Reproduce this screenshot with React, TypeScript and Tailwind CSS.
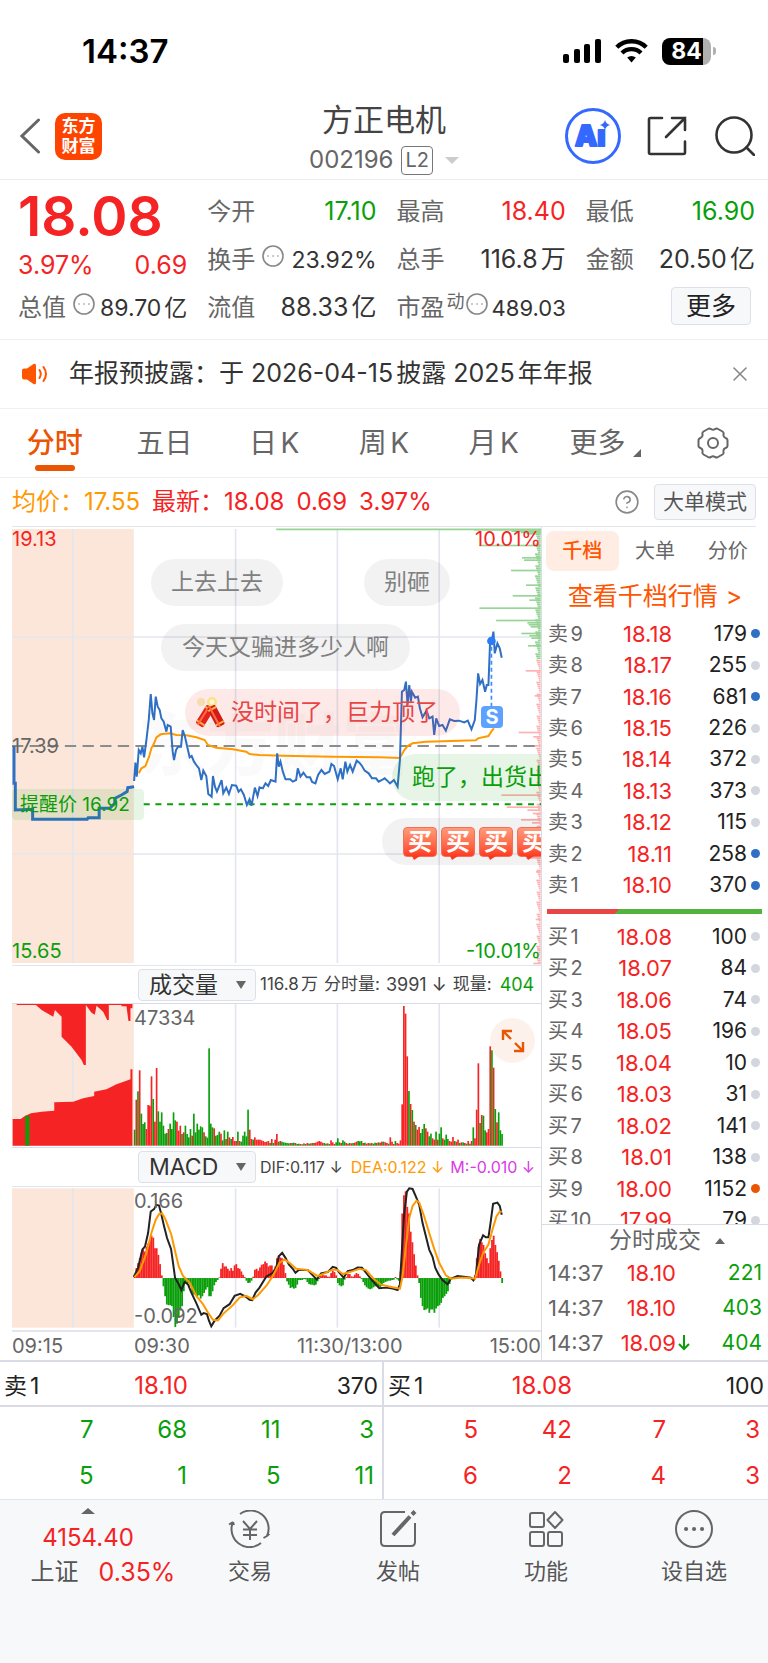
import type { ReactNode } from "react";
import { CircleEllipsis, CircleQuestionMark, X } from "lucide-react";

type Level = { label: string; price: string; qty: string; dot?: string };

const sells: Level[] = [
  { label: "卖9", price: "18.18", qty: "179", dot: "bg-[#2f6fc4]" },
  { label: "卖8", price: "18.17", qty: "255" },
  { label: "卖7", price: "18.16", qty: "681", dot: "bg-[#2f6fc4]" },
  { label: "卖6", price: "18.15", qty: "226" },
  { label: "卖5", price: "18.14", qty: "372" },
  { label: "卖4", price: "18.13", qty: "373" },
  { label: "卖3", price: "18.12", qty: "115" },
  { label: "卖2", price: "18.11", qty: "258", dot: "bg-[#2f6fc4]" },
  { label: "卖1", price: "18.10", qty: "370", dot: "bg-[#2f6fc4]" },
];

const buys: Level[] = [
  { label: "买1", price: "18.08", qty: "100" },
  { label: "买2", price: "18.07", qty: "84" },
  { label: "买3", price: "18.06", qty: "74" },
  { label: "买4", price: "18.05", qty: "196" },
  { label: "买5", price: "18.04", qty: "10" },
  { label: "买6", price: "18.03", qty: "31" },
  { label: "买7", price: "18.02", qty: "141" },
  { label: "买8", price: "18.01", qty: "138" },
  { label: "买9", price: "18.00", qty: "1152", dot: "bg-[#ea5504]" },
  { label: "买10", price: "17.99", qty: "79" },
];

const trades = [
  { time: "14:37", price: "18.10", qty: "221", down: false },
  { time: "14:37", price: "18.10", qty: "403", down: false },
  { time: "14:37", price: "18.09", qty: "404", down: true },
];

// One bar per minute. Above zero is red, below zero is green.
const volume = [
  -48, 138, -163, 226, -96, -65, -70, 50, 122, 120, 208, -140, 72, 233, -103, -72, -100, -60, -36, -38,
  50, -66, -50, -100, -76, 72, 45, 60, -35, 40, -60, -35, -25, -50, 30, -96, -40, -66, -48, -58,
  -55, 40, -28, -24, -292, -66, -55, 52, -30, -32, -42, 36, -16, -46, 20, -42, 25, -20, 26, 14,
  14, -42, 14, -12, -30, -42, -28, -108, 48, 20, -18, 25, 18, 18, 18, 16, 14, 11, 12, 14,
  -8, 20, -8, 18, 35, -12, 14, -12, -10, -9, -8, -7, 8, -8, -9, 8, -5, -6, 5, -4,
  7, -5, 8, -6, 7, -8, 8, 9, 12, 14, 12, 9, -8, -6, 7, -5, 16, 10, 5, -10,
  -22, -10, 8, -16, -12, 8, 6, -8, 7, -8, 9, 12, -14, -13, -14, 8, -9, 6, 8, -7,
  8, -6, -9, 8, -10, 9, 12, -12, 10, 8, -6, 25, 12, 5, -14, 8, 6, 16, 124, 419,
  396, 268, -164, 125, -107, 72, -62, 48, 56, -38, -50, -65, 52, 42, -28, -36, 22, 18, -42, 18,
  -36, -55, 22, -18, -33, -20, 14, 12, 26, -14, 12, 18, -8, 10, -10, 8, -6, 14, -6, 14,
  -55, 22, 108, 247, -68, 92, -90, -46, 40, 50, 298, -286, 234, -110, 70, -100, -46, -35,
];

const macd = [
  10, 30, 45, 60, 75, 85, 80, 95, 105, 115, 128, 122, 90, 90, 70, 42, 8, -25, -55, -80,
  -82, -82, -85, -118, -148, -138, -120, -98, -85, -40, -15, -15, -15, -25, -45, -50, -50, -55, -52, -62,
  -55, -45, -35, -28, -55, -55, -40, -22, -12, -6, 2, 28, 45, 35, 35, 28, 22, 30, 22, 38,
  42, 30, 28, 20, 10, 3, -8, -15, -14, -8, 4, 25, 28, 22, 32, 40, 42, 50, 45, 35,
  38, 38, 25, 35, 60, 68, 62, 60, 40, 15, -10, -20, -30, -28, -32, -30, -20, -6, -6, -6,
  -3, -4, -12, -18, -20, -20, -22, -20, -10, -3, 6, 10, 8, 8, 4, 4, 15, 22, 18, 8,
  -15, -22, -25, -22, -5, 3, 12, 12, 5, 4, 10, 15, 12, 5, -3, -12, -22, -28, -32, -34,
  -32, -28, -25, -22, -26, -28, -24, -15, -12, -10, -8, -8, -6, -5, 3, -4, -8, 20, 195, 250,
  262, 215, 195, 140, 108, 72, 38, 8, -15, -60, -85, -97, -95, -92, -105, -95, -95, -105, -92, -85,
  -82, -75, -60, -55, -48, -40, -18, -3, 0, 0, 0, 2, 2, 0, 0, 2, 0, 0, -3, -4,
  -4, 10, 60, 95, 118, 108, 100, 75, 60, 45, 90, 115, 128, 100, 78, 52, 20, -15,
];

// [y, length] of the long orders in the price distribution on the right edge
const askDepth = [
  [29, 200], [33, 88], [37, 60], [41, 42], [76, 184], [113, 56], [120, 50], [151, 89], [195, 44],
  [227, 84], [240, 34], [264, 184], [301, 134], [308, 40], [314, 36], [320, 30], [340, 58], [347, 34], [354, 28], [377, 38],
];
const bidDepth = [
  [452, 45], [527, 18], [637, 66], [650, 22], [677, 26], [825, 118], [861, 102], [870, 40], [880, 24],
  [899, 59], [908, 26], [1013, 44], [1055, 14], [1198, 15], [1290, 10], [1330, 22],
];

const pricePoints =
  "403,783 407,728 411,770 417,690 423,700 428,680 433,712 440,660 447,600 453,522 458,580 463,600 468,530 474,560 480,570 485,595 492,605 500,635 504,615 513,620 519,695 523,720 529,690 535,680 544,680 549,630 556,650 563,682 570,712 576,708 583,725 592,738 598,745 605,780 611,752 620,768 626,822 636,830 640,768 646,800 652,815 658,800 666,780 671,820 680,803 688,822 697,795 710,797 717,815 724,808 733,825 742,855 750,838 756,857 766,803 774,828 780,802 790,805 798,790 806,798 814,780 828,785 833,700 838,740 843,725 850,755 858,778 872,778 880,785 890,780 895,745 903,770 912,758 922,772 932,772 938,786 948,790 956,765 966,750 976,762 990,755 996,732 1004,738 1015,778 1024,745 1030,778 1038,725 1044,755 1052,735 1060,755 1072,722 1080,728 1088,738 1096,752 1108,760 1118,775 1130,775 1138,785 1148,780 1156,775 1164,782 1172,790 1184,780 1195,800 1202,720 1208,515 1215,510 1220,485 1225,555 1230,495 1235,545 1238,515 1248,533 1256,530 1262,565 1270,592 1282,572 1290,595 1300,590 1305,645 1311,595 1320,618 1330,615 1340,632 1352,598 1365,603 1380,602 1395,607 1406,602 1417,628 1427,600 1432,540 1437,460 1443,492 1450,480 1458,515 1463,495 1468,495 1473,365 1478,365 1483,335 1487,400 1495,370 1502,385 1508,413";
const averagePoints =
  "417,760 425,745 437,738 448,710 455,685 462,672 470,652 483,643 510,640 530,645 560,646 590,652 615,660 625,675 650,683 700,688 740,695 750,702 780,705 850,707 1000,710 1140,712 1202,714 1215,690 1225,678 1240,670 1280,665 1430,661 1437,655 1468,648 1480,630 1485,625";
const auctionPoints =
  "42,678 42,790 46,790 46,870 98,868 98,898 262,898 265,893 298,893 298,865 330,865 345,850 345,835 365,825 382,815 384,803 403,800";
const difPoints =
  "402,383 415,355 428,300 436,290 445,250 453,185 463,178 470,165 478,167 484,190 492,225 502,265 514,298 520,340 526,385 537,405 545,422 555,398 565,405 575,430 590,462 605,497 612,492 622,495 628,515 635,532 645,515 660,500 672,477 690,465 705,440 722,434 738,442 750,452 758,453 768,430 780,415 800,382 820,370 830,355 838,320 848,310 858,325 868,345 880,358 888,370 898,362 925,362 940,378 952,390 965,372 985,368 1000,352 1010,355 1020,370 1033,385 1045,365 1060,362 1075,354 1088,355 1100,370 1120,395 1140,417 1160,415 1180,418 1195,422 1202,405 1208,300 1215,190 1223,125 1230,115 1240,117 1250,140 1260,165 1270,220 1280,260 1290,300 1300,322 1308,355 1318,375 1330,392 1345,405 1355,388 1375,380 1400,383 1415,385 1423,393 1430,380 1440,285 1452,257 1460,263 1468,263 1475,215 1482,162 1495,158 1502,168 1508,195";
const deaPoints =
  "404,383 420,365 440,310 455,250 468,210 478,193 487,190 497,208 515,255 525,300 537,350 550,380 570,400 590,440 610,465 625,490 640,512 655,514 670,495 700,468 720,445 740,440 760,450 775,438 800,410 820,380 840,340 855,330 870,340 890,358 925,362 955,380 975,372 1000,360 1015,362 1030,374 1060,365 1080,358 1100,362 1120,385 1145,406 1180,414 1202,418 1210,380 1220,290 1230,205 1240,168 1252,152 1260,158 1275,200 1290,250 1305,298 1320,340 1340,378 1355,388 1380,385 1405,385 1428,388 1440,345 1452,310 1468,285 1480,240 1492,200 1502,185 1508,187";

function StatusBar() {
  return (
    <div className="flex h-24 items-center justify-between pl-[82px] pr-[52px] pt-1.5">
      <span className="text-[33px] font-semibold leading-10 text-black">14:37</span>
      <div className="flex items-center gap-3.5">
        <svg className="h-6 w-[38px]" viewBox="0 0 38 24">
          <rect x="0" y="15" width="6" height="9" rx="2" />
          <rect x="11" y="10" width="6" height="14" rx="2" />
          <rect x="21" y="5" width="6" height="19" rx="2" />
          <rect x="32" y="0" width="6" height="24" rx="2" />
        </svg>
        <svg className="h-6 w-[33px]" viewBox="0 0 33 24" fill="none" stroke="black" strokeWidth="4.4">
          <path d="M1.8 8.2a21 21 0 0 1 29.4 0" />
          <path d="M7 14a13.6 13.6 0 0 1 19 0" />
          <path d="M12.2 18.6a6.4 6.4 0 0 1 8.6 0L16.5 23.5z" fill="black" stroke="none" />
        </svg>
        <div className="flex items-center gap-0.5">
          <span className="flex h-[27px] w-[49px] items-center justify-center rounded-[8px] bg-linear-to-r from-black from-84% to-[#b0b0b0] to-84% text-[23px] font-bold leading-6 text-white">
            84
          </span>
          <span className="h-2 w-[3px] rounded-r-full bg-[#b0b0b0]" />
        </div>
      </div>
    </div>
  );
}

function Header() {
  return (
    <header className="grid h-[84px] grid-cols-[1fr_auto_1fr] items-center border-b border-[#ececec] px-[13px]">
      <div className="flex items-center gap-[15px] pb-1 pl-[7px]">
        <button aria-label="返回">
          <svg className="h-9 w-5" viewBox="0 0 20 36" fill="none" stroke="#666" strokeWidth="3" strokeLinecap="round">
            <path d="M18.500 2 2 18 18.500 34" />
          </svg>
        </button>
        <span className="flex h-[47px] w-[47px] flex-col justify-center rounded-[10px] bg-[#ff4400] text-center text-[17px] font-bold leading-5 text-white">
          <span>东方</span>
          <span>财富</span>
        </span>
      </div>
      <div className="flex flex-col items-center pt-1">
        <h1 className="text-[31px] leading-10 text-[#444]">方正电机</h1>
        <div className="flex h-10 items-center gap-2 text-2xl text-[#666]">
          <span>002196</span>
          <span className="rounded border border-[#777] px-[3px] text-[20px] leading-[27px]">L2</span>
          <span className="ml-1 border-x-[7px] border-t-[7px] border-x-transparent border-t-[#ccc]" />
        </div>
      </div>
      <div className="flex items-center justify-end gap-[26px] pb-1">
        <button aria-label="Ai">
          <svg className="h-14 w-14" viewBox="0 0 56 56">
            <circle cx="28" cy="28" r="26.500" fill="none" stroke="#3468ff" strokeWidth="3" />
            <text
              x="10"
              y="38"
              fill="#3468ff"
              stroke="#3468ff"
              strokeWidth="2"
              strokeLinejoin="round"
              className="text-[28px] font-black"
            >
              Aı
            </text>
            <path d="M40 12q1 4 5 5-4 1-5 5-1-4-5-5 4-1 5-5z" fill="#3468ff" />
          </svg>
        </button>
        <button aria-label="分享">
          <svg className="h-10 w-10" viewBox="0 0 40 40" fill="none" stroke="#333" strokeWidth="2.600" strokeLinecap="round">
            <path d="M15 2H3.500Q2 2 2 3.500V36.500Q2 38 3.500 38H36.500Q38 38 38 36.500V25.500" />
            <path d="M25 2H38V14M38 2 19 21" />
          </svg>
        </button>
        <button aria-label="搜索" className="ml-0.5">
          <svg className="h-10 w-10" viewBox="0 0 40 40" fill="none" stroke="#333" strokeWidth="2.600" strokeLinecap="round">
            <circle cx="19" cy="19" r="17.500" />
            <path d="M31.500 31.500 39 39" />
          </svg>
        </button>
      </div>
    </header>
  );
}

function Metric({ label, children }: { label: ReactNode; children: ReactNode }) {
  return (
    <div className="flex h-12 items-center justify-between whitespace-nowrap">
      <span className="flex text-2xl text-[#666]">{label}</span>
      {children}
    </div>
  );
}

function InfoDots() {
  return <CircleEllipsis className="ml-1.5 h-6 w-6 text-[#888]" strokeWidth={1.6} />;
}

function Quote() {
  return (
    <section className="grid grid-cols-4 gap-x-5 border-b border-[#f0f0f0] pb-[7px] pl-[18px] pr-[13px] pt-2 text-[25px] text-[#333]">
      <div className="text-[#f52323]">
        <div className="flex h-14 items-center text-[55px] font-semibold">18.08</div>
        <div className="flex h-11 items-center justify-between">
          <span>3.97%</span>
          <span>0.69</span>
        </div>
        <div className="flex h-10 items-center justify-between whitespace-nowrap text-[#333]">
          <span className="flex text-2xl text-[#666]">
            总值
            <InfoDots />
          </span>
          <span className="text-[23px]">89.70亿</span>
        </div>
      </div>
      <div>
        <Metric label="今开">
          <span className="text-[#0a9f0a]">17.10</span>
        </Metric>
        <Metric
          label={
            <>
              换手
              <InfoDots />
            </>
          }
        >
          <span className="text-[23px]">23.92%</span>
        </Metric>
        <Metric label="流值">
          <span>88.33亿</span>
        </Metric>
      </div>
      <div>
        <Metric label="最高">
          <span className="text-[#f52323]">18.40</span>
        </Metric>
        <Metric label="总手">
          <span>116.8万</span>
        </Metric>
        <Metric
          label={
            <>
              市盈<sup className="top-0 ml-0.5 text-[18px] leading-5">动</sup>
              <CircleEllipsis className="h-6 w-6 text-[#888]" strokeWidth={1.6} />
            </>
          }
        >
          <span className="text-[22px]">489.03</span>
        </Metric>
      </div>
      <div>
        <Metric label="最低">
          <span className="text-[#0a9f0a]">16.90</span>
        </Metric>
        <Metric label="金额">
          <span>20.50亿</span>
        </Metric>
        <div className="flex h-11 items-center justify-end pr-1">
          <button className="h-[38px] w-20 rounded border border-[#dde0e8] bg-[#f7f8fa] leading-8 text-[#222]">更多</button>
        </div>
      </div>
    </section>
  );
}

function Notice() {
  return (
    <div className="flex h-[69px] items-center border-b border-[#f0f0f0] pl-[22px] pr-4">
      <svg className="h-6 w-[26px]" viewBox="0 0 26 24" fill="#ff5500">
        <path d="M0 8.500Q0 6.500 2 6.500H5L11.500 2Q14 .8 14 3.500V20.500Q14 23.200 11.500 22L5 17.500H2Q0 17.500 0 15.500z" />
        <path d="M17.500 8q2.500 4 0 8M21.500 5q5 7 0 14" fill="none" stroke="#ff5500" strokeWidth="2" strokeLinecap="round" />
      </svg>
      <p className="ml-[21px] flex-1 text-[25px] text-[#333]">年报预披露：于 2026-04-15披露 2025年年报</p>
      <button aria-label="关闭">
        <X className="h-6 w-6 text-[#888]" strokeWidth={1.6} />
      </button>
    </div>
  );
}

function Tabs() {
  return (
    <nav className="grid h-[69px] grid-cols-7 border-b border-[#f0f0f0] text-[28px] text-[#666]">
      <button className="relative font-medium text-[#ea5504]">
        分时
        <span className="absolute bottom-1.5 left-1/2 h-[6px] w-10 -translate-x-1/2 rounded-full bg-[#ea5504]" />
      </button>
      <button>五日</button>
      <button>日K</button>
      <button>周K</button>
      <button>月K</button>
      <button className="flex items-center justify-center gap-2 pl-1">
        更多
        <svg className="mt-5 h-2 w-2" viewBox="0 0 8 8">
          <path d="M8 0V8H0z" fill="#666" />
        </svg>
      </button>
      <button aria-label="设置" className="flex items-center justify-center">
        <svg className="h-8 w-8" viewBox="0 0 32 32" fill="none" stroke="#666" strokeWidth="2" strokeLinejoin="round">
          <path d="M11 2Q12 1 14 2Q16 3.500 18 2Q20 1 21 2L25.500 4.500Q27 5.500 26.500 7.500Q26 10 28.500 11Q30.500 11.500 30.500 13.500V18.500Q30.500 20.500 28.500 21Q26 22 26.500 24.500Q27 26.500 25.500 27.500L21 30Q20 31 18 30Q16 28.500 14 30Q12 31 11 30L6.500 27.500Q5 26.500 5.500 24.500Q6 22 3.500 21Q1.500 20.500 1.500 18.500V13.500Q1.500 11.500 3.500 11Q6 10 5.500 7.500Q5 5.500 6.500 4.500z" />
          <circle cx="16" cy="16" r="5" />
        </svg>
      </button>
    </nav>
  );
}

function AverageBar() {
  return (
    <div className="mx-3 flex h-[49px] items-center whitespace-nowrap border-b border-[#e2e5ec] text-2xl text-[#f52323]">
      <span className="text-[#ff9900]">均价：17.55</span>
      <span className="ml-3">最新：18.08</span>
      <span className="ml-3">0.69</span>
      <span className="ml-3">3.97%</span>
      <CircleQuestionMark className="ml-auto h-[26px] w-[26px] text-[#888]" strokeWidth={1.5} />
      <button className="ml-3.5 h-9 rounded border border-[#dde0e8] bg-[#f7f8fa] px-2 text-[21px] leading-8 text-[#555]">
        大单模式
      </button>
    </div>
  );
}

function GridLines({ top, bottom }: { top: number; bottom: number }) {
  return (
    <g>
      <rect x="36" y={top} width="366" height={bottom - top} fill="#fce6da" />
      {[219, 708, 1014, 1320].map((x) => (
        <path key={x} d={`M${x} ${top}V${bottom}`} stroke="#e3e6ee" strokeWidth="5" />
      ))}
    </g>
  );
}

function Depth({ rows, from, to, color }: { rows: number[][]; from: number; to: number; color: string }) {
  const noise = [];
  for (let y = from; y < to; y += 6) {
    noise.push([y, 3 + ((y * 7) % 11) + (y < 420 ? 4 : 0)]);
  }
  return (
    <g fill={color}>
      {[...noise, ...rows].map(([y, w], i) => (
        <rect key={i} x={1625 - w} y={y - 2} width={w} height="5" />
      ))}
    </g>
  );
}

function Firecracker() {
  return (
    <svg className="h-8 w-[30px]" viewBox="0 0 30 32">
      <circle cx="6" cy="5" r="4" fill="#f6dcae" />
      <circle cx="17" cy="5" r="5" fill="#ffe08a" />
      <circle cx="17" cy="5" r="2.500" fill="#fff7d6" />
      <g transform="rotate(32 10 18)">
        <rect x="6" y="8" width="9" height="22" rx="2" fill="#e3231b" />
        <rect x="6" y="10" width="9" height="2" fill="#f4b73c" />
        <rect x="6" y="26" width="9" height="2" fill="#f4b73c" />
        <rect x="8" y="8" width="2" height="22" fill="#ff6b4a" />
      </g>
      <g transform="rotate(-28 21 18)">
        <rect x="16" y="8" width="9" height="22" rx="2" fill="#d41a15" />
        <rect x="16" y="10" width="9" height="2" fill="#f4b73c" />
        <rect x="16" y="26" width="9" height="2" fill="#f4b73c" />
        <rect x="18" y="8" width="2" height="22" fill="#ff6b4a" />
      </g>
    </svg>
  );
}

function BuyBadge() {
  return (
    <span className="relative flex h-[30px] w-[34px] shrink-0 items-center justify-center rounded border border-[#f0705a] bg-linear-to-b from-[#ff9a78] to-[#ff3a20] text-[24px] font-bold leading-7 text-white">
      买
      <svg className="absolute -bottom-1 left-2 h-1 w-2" viewBox="0 0 8 4">
        <path d="M0 0H8L2 4z" fill="#f63a20" />
      </svg>
    </span>
  );
}

function PriceChart() {
  return (
    <div className="relative h-[439px] overflow-hidden border-b border-[#e2e5ec] text-[20px] leading-6">
      <span className="absolute left-[126px] top-[178px] text-[68px] font-black leading-[80px] text-black/2">东方财富</span>
      <svg className="absolute inset-0 h-full w-full" viewBox="36 21 1590 1314" preserveAspectRatio="none" fill="none">
        <GridLines top={27} bottom={1329} />
        <path d="M36 351H1626M36 1002H1626" stroke="#e3e6ee" strokeWidth="5" />
        <path d="M830 28H1626" stroke="#97d597" strokeWidth="5" />
        <Depth rows={askDepth} from={30} to={415} color="#97d597" />
        <Depth rows={bidDepth} from={421} to={1332} color="#ffb0b0" />
        <path d="M36 678H1626" stroke="#8c8c8c" strokeWidth="6" strokeDasharray="34 19" />
        <path d="M432 853H1626" stroke="#0a9f0a" strokeWidth="6" strokeDasharray="18 17" />
        <polyline points={averagePoints} stroke="#ff9900" strokeWidth="6" />
        <polyline points={auctionPoints} stroke="#2f6fc4" strokeWidth="9" />
        <polyline points={pricePoints} stroke="#2f6fc4" strokeWidth="6" />
        <path d="M1477 380V560" stroke="#3d8bff" strokeWidth="5" strokeDasharray="12 9" />
        <circle cx="1477" cy="363" r="13" fill="#2a7bf5" />
      </svg>
      <span className="absolute left-0 top-0 text-[#f52323]">19.13</span>
      <span className="absolute right-0 top-0 text-[#f52323]">10.01%</span>
      <span className="absolute left-0 top-[207px] text-[#666]">17.39</span>
      <span className="absolute bottom-0.5 left-0 text-[#0a9f0a]">15.65</span>
      <span className="absolute bottom-0.5 right-0 text-[#0a9f0a]">-10.01%</span>
      <span className="absolute left-0 top-[262px] h-[31px] w-[132px] whitespace-nowrap rounded bg-[#0a9f0a]/10 pl-2 text-[19px] leading-8 text-[#0a9f0a]">
        提醒价 16.92
      </span>
      <span className="absolute left-[469px] top-[179px] flex h-[22px] w-[22px] items-center justify-center rounded bg-[#5da2ff] text-[20px] font-bold text-white">
        S
      </span>
      <div className="absolute inset-0 overflow-hidden whitespace-nowrap text-[23px] leading-[47px] text-[#808080]">
        <span className="absolute left-[139px] top-8 rounded-full bg-black/5 px-5">上去上去</span>
        <span className="absolute left-[352px] top-8 rounded-full bg-black/5 px-5">别砸</span>
        <span className="absolute left-[149px] top-[97px] rounded-full bg-black/5 px-[21px]">今天又骗进多少人啊</span>
        <span className="absolute left-[173px] top-[162px] flex items-center gap-1.5 rounded-full bg-[#f52323]/10 pl-2.5 pr-[22px] text-[#e84545]">
          <Firecracker />
          没时间了，巨力顶了
        </span>
        <span className="absolute left-[380px] top-[227px] rounded-full bg-[#0a9f0a]/10 px-5 text-[#0a9f0a]">跑了，出货出货</span>
        <span className="absolute left-[370px] top-[291px] flex h-[47px] items-center gap-1 rounded-full bg-black/5 px-[21px]">
          <BuyBadge />
          <BuyBadge />
          <BuyBadge />
          <BuyBadge />
        </span>
      </div>
    </div>
  );
}

function IndicatorSelect({ id, label, options }: { id: string; label: string; options: string[] }) {
  return (
    <div className="relative ml-[126px] shrink-0">
      <label htmlFor={id} className="sr-only">
        {label}
      </label>
      <select
        id={id}
        className="block h-8 w-[118px] appearance-none rounded border border-[#dde0e8] bg-[#f7f8fa] pl-2.5 text-[23px] leading-7 text-[#333]"
      >
        {options.map((o) => (
          <option key={o}>{o}</option>
        ))}
      </select>
      <span className="pointer-events-none absolute right-2.5 top-3 border-x-[5px] border-t-[8px] border-x-transparent border-t-[#666]" />
    </div>
  );
}

function VolumeChart() {
  return (
    <>
      <div className="flex h-[38px] items-center whitespace-nowrap border-b border-[#d9dce5] text-[17px] text-[#444]">
        <IndicatorSelect id="volume-indicator" label="副图一" options={["成交量", "MACD", "KDJ"]} />
        <span className="ml-1">116.8万</span>
        <span className="ml-1.5">分时量:</span>
        <span className="ml-1.5 text-[18px]">3991 ↓</span>
        <span className="ml-1.5">现量:</span>
        <span className="ml-2 text-[18px] text-[#0a9f0a]">404</span>
      </div>
      <div className="relative h-[144px] border-b border-[#d9dce5]">
        <svg className="absolute inset-0 h-full w-full" viewBox="36 522 1590 429" preserveAspectRatio="none">
          <GridLines top={522} bottom={948} />
          <path
            fill="#f52323"
            d="M38 867H62L75 858L93 850L125 845L163 842V817L220 815L250 805L283 798V785L320 778L350 763L380 752L392 748V718H398V947H38zM50 520V525H108L125 540L160 560L165 540L185 560V620L215 650L245 690L252 705H258V525L275 548L285 554L290 527L310 545L322 570H327V525H365V529H380L386 573H392V535H398V520z"
          />
          <rect x="76" y="857" width="12" height="90" fill="#0a9f0a" />
          {volume.map((v, i) => (
            <rect
              key={i}
              x={402 + i * 5.09}
              y={947 - Math.abs(v)}
              width="5"
              height={Math.abs(v)}
              fill={v > 0 ? "#f52323" : "#0a9f0a"}
            />
          ))}
        </svg>
        <span className="absolute left-[122px] top-0.5 text-[20px] leading-6 text-[#666]">47334</span>
        <button
          aria-label="全屏"
          className="absolute right-1.5 top-3.5 flex h-[45px] w-[45px] items-center justify-center rounded-full bg-[#ea5504]/8"
        >
          <svg className="h-6 w-6" viewBox="0 0 24 24" fill="none" stroke="#ea5504" strokeWidth="2.400">
            <path d="M2 11V2H11M2 2 10 10M22 13V22H13M22 22 14 14" />
          </svg>
        </button>
      </div>
    </>
  );
}

function MacdChart() {
  return (
    <>
      <div className="flex h-[39px] items-center whitespace-nowrap border-b border-[#e2e5ec] text-[16px] text-[#444]">
        <IndicatorSelect id="macd-indicator" label="副图二" options={["MACD", "成交量", "KDJ"]} />
        <span className="ml-1">DIF:0.117 ↓</span>
        <span className="ml-2 text-[#ff9900]">DEA:0.122 ↓</span>
        <span className="ml-1.5 text-[#d93be6]">M:-0.010 ↓</span>
      </div>
      <div className="relative h-[145px] border-b-2 border-[#e2e5ec] text-[20px] leading-6 text-[#666]">
        <svg className="absolute inset-0 h-full w-full" viewBox="36 111 1590 432" preserveAspectRatio="none" fill="none">
          <GridLines top={115} bottom={536} />
          {macd.map((v, i) => (
            <rect
              key={i}
              x={402 + i * 5.09}
              y={v > 0 ? 386 - v : 386}
              width="5.400"
              height={Math.abs(v)}
              fill={v > 0 ? "#f52323" : "#0a9f0a"}
            />
          ))}
          <polyline points={difPoints} stroke="#222" strokeWidth="6" />
          <polyline points={deaPoints} stroke="#ff9900" strokeWidth="6" />
        </svg>
        <span className="absolute left-[122px] top-0.5">0.166</span>
        <span className="absolute bottom-0.5 left-[122px]">-0.092</span>
      </div>
    </>
  );
}

function TimeAxis() {
  return (
    <div className="flex h-7 items-center text-[20px] text-[#666]">
      <span className="w-[122px]">09:15</span>
      <span>09:30</span>
      <span className="mx-auto pl-5">11:30/13:00</span>
      <span>15:00</span>
    </div>
  );
}

function Levels({ rows }: { rows: Level[] }) {
  return (
    <table className="h-full w-full table-fixed text-[21px] leading-6">
      <tbody>
        {rows.map((row) => (
          <tr key={row.label}>
            <td className="w-[60px] whitespace-nowrap p-0 text-[20px] text-[#666]">{row.label}</td>
            <td className="w-[64px] p-0 text-right text-[22px] text-[#f52323]">{row.price}</td>
            <td className="p-0 text-right text-[#222]">{row.qty}</td>
            <td className="w-3.5 p-0">
              <span className={`ml-1 block h-[9px] w-[9px] rounded-full ${row.dot ?? "bg-[#d3d6de]"}`} />
            </td>
          </tr>
        ))}
      </tbody>
    </table>
  );
}

function OrderBook() {
  return (
    <aside className="w-[226px] shrink-0">
      <div className="grid h-[47px] grid-cols-3 px-1 pt-1 text-[20px] text-[#666]">
        <button className="h-10 rounded-lg bg-[#ffede4] font-medium text-[#ff5500]">千档</button>
        <button className="h-10">大单</button>
        <button className="h-10">分价</button>
      </div>
      <a href="#" className="flex h-11 items-center justify-center gap-2 pt-0.5 text-[25px] text-[#ff5500]">
        查看千档行情<span>&gt;</span>
      </a>
      <div className="h-[283px] pl-1.5 pr-[7px]">
        <Levels rows={sells} />
      </div>
      <div className="flex h-5 items-center pl-[5px] pr-1.5">
        <span className="h-[5px] flex-1 bg-linear-[135deg] from-[#e84545] from-33% to-[#52b43c] to-33%" />
      </div>
      <div className="h-[303px] overflow-hidden pl-1.5 pr-[7px]">
        <div className="h-[315px]">
          <Levels rows={buys} />
        </div>
      </div>
      <button className="flex h-8 w-full items-center justify-center gap-3.5 border-t border-[#d9dce5] pl-6 text-[23px] text-[#666]">
        分时成交
        <span className="border-x-[5px] border-b-[6px] border-x-transparent border-b-[#666]" />
      </button>
      <table className="h-[104px] w-full table-fixed text-[22px] leading-6">
        <tbody>
          {trades.map((t) => (
            <tr key={t.qty}>
              <td className="w-[72px] p-0 pl-1.5 text-[#666]">{t.time}</td>
              <td className="w-[62px] p-0 text-right text-[#f52323]">{t.price}</td>
              <td className="w-4 p-0 text-[#0a9f0a]">
                {t.down && (
                  <svg className="ml-0.5 h-4 w-3" viewBox="0 0 12 16" fill="none" stroke="currentColor" strokeWidth="2">
                    <path d="M6 0V14M1 9 6 14 11 9" />
                  </svg>
                )}
              </td>
              <td className="p-0 pr-1.5 text-right text-[21px] text-[#0a9f0a]">{t.qty}</td>
            </tr>
          ))}
        </tbody>
      </table>
    </aside>
  );
}

function Queue({ label, price, qty, rows, color }: { label: string; price: string; qty: string; rows: string[][]; color: string }) {
  return (
    <div className="text-[24px] leading-8">
      <div className="flex h-[47px] items-center border-y-2 border-[#d9dce5] px-1 pt-1 text-[23px] text-[#222]">
        <span className="w-[91px]">{label}</span>
        <span className="w-[93px] text-right text-[24px] text-[#f52323]">{price}</span>
        <span className="flex-1 text-right">{qty}</span>
      </div>
      <div className="pr-2">
        <table className={`w-full table-fixed text-right ${color}`}>
          <tbody>
            {rows.map((row, i) => (
              <tr key={i} className="h-[46px]">
                {row.map((cell, j) => (
                  <td key={j} className="p-0">
                    {cell}
                  </td>
                ))}
              </tr>
            ))}
          </tbody>
        </table>
      </div>
    </div>
  );
}

function NavItem({ label, children }: { label: string; children: ReactNode }) {
  return (
    <button className="flex flex-col items-center gap-2 pt-2.5">
      <svg className="h-[38px] w-11" viewBox="0 0 44 38" fill="none" stroke="#666" strokeWidth="2">
        {children}
      </svg>
      <span className="text-[22px] leading-[30px]">{label}</span>
    </button>
  );
}

function BottomNav() {
  return (
    <nav className="grid h-[164px] grid-cols-[176px_repeat(4,1fr)] items-start border-t border-[#e2e5ec] bg-[#f7f8fa] text-[#555]">
      <button className="flex flex-col items-center pt-2 text-[#f52323]">
        <span className="border-x-[7px] border-b-[6px] border-x-transparent border-b-[#666]" />
        <span className="mt-2 text-2xl leading-8">4154.40</span>
        <span className="mt-0.5 flex gap-5 pl-[30px] text-[25px] leading-8">
          <span className="text-2xl leading-8 text-[#555]">上证</span>
          <span>0.35%</span>
        </span>
      </button>
      <NavItem label="交易">
        <path d="M12 4A18 18 0 0 1 39 26M39 26l2.500-2.500M39 26l-3.500 2M33 33A18 18 0 0 1 5 12M5 12l-4 2.500M5 12l1 3" />
        <path d="M15 11l7 8 7-8M22 19V30M15 19.500H29M15 25H29" />
      </NavItem>
      <NavItem label="发帖">
        <path d="M29 2H9Q5 2 5 6V32Q5 36 9 36H35Q39 36 39 32V13" />
        <path d="M17 25 34 6.500" strokeWidth="4" />
        <path d="M36 4.500 39 1.500" strokeWidth="4" />
      </NavItem>
      <NavItem label="功能">
        <rect x="6" y="3" width="14" height="14" rx="2" />
        <rect x="6" y="22" width="14" height="14" rx="2" />
        <rect x="24" y="22" width="14" height="14" rx="2" />
        <path d="M31 2 38.500 10 31 18 23.500 10z" strokeLinejoin="round" />
      </NavItem>
      <NavItem label="设自选">
        <circle cx="22" cy="19" r="18" />
        <path d="M14 19h.1M22 19h.1M30 19h.1" strokeWidth="4" strokeLinecap="round" />
      </NavItem>
    </nav>
  );
}

export default function App() {
  return (
    <div className="w-full bg-white font-['Inter','Noto_Sans_CJK_SC',sans-serif] [text-autospace:normal]">
      <StatusBar />
      <Header />
      <Quote />
      <Notice />
      <Tabs />
      <AverageBar />
      <main className="flex">
        <div className="min-w-0 flex-1 border-r border-[#d9dce5] pl-3">
          <PriceChart />
          <VolumeChart />
          <MacdChart />
          <TimeAxis />
        </div>
        <OrderBook />
      </main>
      <section className="grid grid-cols-2">
        <div className="border-r-2 border-[#d9dce5]">
          <Queue
            label="卖1"
            price="18.10"
            qty="370"
            color="text-[#0a9f0a]"
            rows={[
              ["7", "68", "11", "3"],
              ["5", "1", "5", "11"],
            ]}
          />
        </div>
        <Queue
          label="买1"
          price="18.08"
          qty="100"
          color="text-[#f52323]"
          rows={[
            ["5", "42", "7", "3"],
            ["6", "2", "4", "3"],
          ]}
        />
      </section>
      <BottomNav />
    </div>
  );
}
